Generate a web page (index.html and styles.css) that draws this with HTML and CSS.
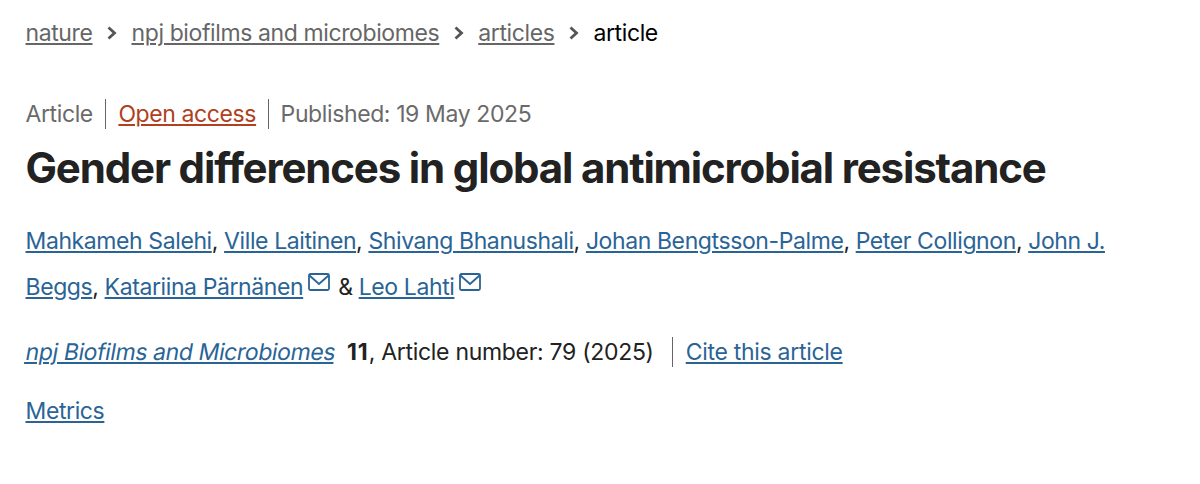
FILE: index.html
```
<!DOCTYPE html>
<html lang="en">
<head>
	<meta charset="utf-8">
	<meta name="viewport" content="width=device-width, initial-scale=1">
	<title>Gender differences in global antimicrobial resistance</title>
	<link rel="stylesheet" href="styles.css">
</head>
<body>
	<nav class="breadcrumbs">
		<a href="#">nature</a>
		<svg class="chevron" viewBox="0 0 10 14"><path d="M1.5 1.5l6 5.5-6 5.5"/></svg>
		<a href="#">npj biofilms and microbiomes</a>
		<svg class="chevron" viewBox="0 0 10 14"><path d="M1.5 1.5l6 5.5-6 5.5"/></svg>
		<a href="#">articles</a>
		<svg class="chevron" viewBox="0 0 10 14"><path d="M1.5 1.5l6 5.5-6 5.5"/></svg>
		<span class="current">article</span>
	</nav>
	<main>
		<ul class="identifiers">
			<li>Article</li>
			<li><a class="open-access" href="#">Open access</a></li>
			<li>Published: 19 May 2025</li>
		</ul>
		<h1>Gender differences in global antimicrobial resistance</h1>
		<div class="authors">
			<div class="author-line"><a href="#">Mahkameh Salehi</a>, <a href="#">Ville Laitinen</a>, <a href="#">Shivang Bhanushali</a>, <a href="#">Johan Bengtsson-Palme</a>, <a href="#">Peter Collignon</a>, <a href="#">John J.</a></div>
			<div class="author-line"><a href="#">Beggs</a>, <a href="#">Katariina Pärnänen</a><svg class="mail" viewBox="0 0 22 18"><rect x="1" y="1" width="20" height="16" rx="1.5"/><path d="M1.5 2.5l9.5 8.5 9.5-8.5"/></svg> &amp; <a href="#">Leo Lahti</a><svg class="mail" viewBox="0 0 22 18"><rect x="1" y="1" width="20" height="16" rx="1.5"/><path d="M1.5 2.5l9.5 8.5 9.5-8.5"/></svg></div>
		</div>
		<div class="journal">
			<a class="journal-title" href="#">npj Biofilms and Microbiomes</a>
			<span class="volume"><b>11</b>, Article number: 79 (2025)</span>
			<span class="cite"><a href="#">Cite this article</a></span>
		</div>
		<a class="metrics" href="#">Metrics</a>
	</main>
</body>
</html>
```
FILE: styles.css
```
* {
	box-sizing: border-box;
	margin: 0;
	padding: 0;
}
body {
	background: #fff;
	color: #222;
	font-family: Inter, "Liberation Sans", sans-serif;
	font-size: 23px;
	line-height: 30px;
	letter-spacing: -0.39px;
	padding: 18px 25.5px 0;
	white-space: nowrap;
}

a {
	color: #2a6496;
	text-decoration: underline;
	text-decoration-thickness: 1.5px;
	text-underline-offset: 2px;
}

.breadcrumbs {
	display: flex;
	align-items: center;
}

.breadcrumbs a {
	color: #666;
}

.current {
	color: #000;
}

.chevron {
	width: 10px;
	height: 14px;
	margin: 0 14.5px;
	fill: none;
	stroke: #555;
	stroke-width: 2.8;
}

.identifiers {
	display: flex;
	list-style: none;
	margin-top: 51px;
	color: #6a6a6a;
}

.identifiers li + li {
	border-left: 1px solid #666;
	margin-left: 12.5px;
	padding-left: 12px;
}

.identifiers li:last-child {
	margin-left: 11.5px;
	padding-left: 12px;
}

.identifiers .open-access {
	color: #b04020;
}

h1 {
	font-size: 42px;
	line-height: 50px;
	letter-spacing: -1.16px;
	margin-top: 14px;
}

.authors {
	margin-top: 25px;
}

.author-line {
	line-height: 46px;
	letter-spacing: -0.4px;
}

.mail {
	width: 22px;
	height: 18px;
	margin: 0 2px 0 5px;
	vertical-align: 4px;
	fill: none;
	stroke: #2a6496;
	stroke-width: 1.8;
}

.journal {
	display: flex;
	margin-top: 27px;
	letter-spacing: -0.3px;
}

/* upright letters slanted, so the a keeps its two storeys */
.journal-title {
	font-style: normal;
	transform: skewX(-10deg);
	letter-spacing: -0.39px;
}

.volume {
	margin-left: 12px;
}

.volume b {
	letter-spacing: 1px;
}

.cite {
	border-left: 1px solid #666;
	margin-left: 18.5px;
	padding-left: 12.5px;
}

.metrics {
	display: inline-block;
	margin-top: 29px;
}
```
